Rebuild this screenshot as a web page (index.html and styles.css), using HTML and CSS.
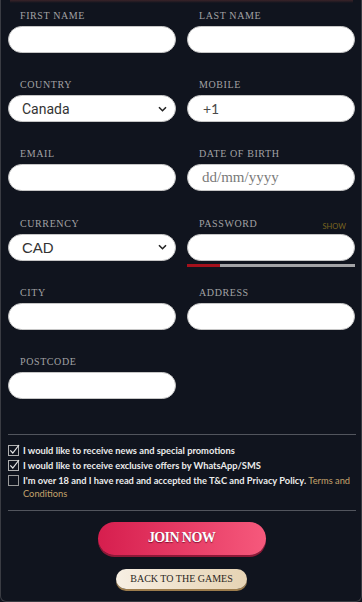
FILE: index.html
```html
<!DOCTYPE html>
<html lang="en">
<head>
<meta charset="utf-8">
<title>Register</title>
<link rel="stylesheet" href="styles.css">
</head>
<body>
<div class="panel">
  <div class="glow"></div>
  <form class="grid">
    <div class="field">
      <label class="lbl">FIRST NAME</label>
      <input class="inp" type="text">
    </div>
    <div class="field">
      <label class="lbl">LAST NAME</label>
      <input class="inp" type="text">
    </div>
    <div class="field">
      <label class="lbl">COUNTRY</label>
      <div class="inp select"><span class="val-roboto">Canada</span>
        <svg class="chev" width="9" height="6" viewBox="0 0 9 6"><path d="M1 1.2 L4.5 4.7 L8 1.2" fill="none" stroke="#222" stroke-width="1.6"/></svg>
      </div>
    </div>
    <div class="field">
      <label class="lbl">MOBILE</label>
      <input class="inp mobile" type="text" value="+1">
    </div>
    <div class="field">
      <label class="lbl">EMAIL</label>
      <input class="inp" type="text">
    </div>
    <div class="field">
      <label class="lbl">DATE OF BIRTH</label>
      <input class="inp date" type="text" placeholder="dd/mm/yyyy">
    </div>
    <div class="field">
      <label class="lbl">CURRENCY</label>
      <div class="inp select"><span class="val-arial">CAD</span>
        <svg class="chev" width="9" height="6" viewBox="0 0 9 6"><path d="M1 1.2 L4.5 4.7 L8 1.2" fill="none" stroke="#222" stroke-width="1.6"/></svg>
      </div>
    </div>
    <div class="field">
      <div class="lbl-row"><label class="lbl">PASSWORD</label><span class="show">SHOW</span></div>
      <input class="inp" type="password">
      <div class="meter"><span class="meter-fill" style="width:33px"></span></div>
    </div>
    <div class="field">
      <label class="lbl">CITY</label>
      <input class="inp" type="text">
    </div>
    <div class="field">
      <label class="lbl">ADDRESS</label>
      <input class="inp" type="text">
    </div>
    <div class="field">
      <label class="lbl">POSTCODE</label>
      <input class="inp" type="text">
    </div>
  </form>

  <div class="sep sep-top"></div>

  <ul class="checks">
    <li class="check">
      <svg class="box" width="13" height="12" viewBox="0 0 13 12"><rect x="0.5" y="1.5" width="10" height="10" fill="none" stroke="#b0b0b0"/><path d="M2.3 6.3 L4.8 9 L11 1" fill="none" stroke="#e6e6e6" stroke-width="1.2"/></svg>
      <div class="ctext">I would like to receive news and special promotions</div>
    </li>
    <li class="check">
      <svg class="box" width="13" height="12" viewBox="0 0 13 12"><rect x="0.5" y="1.5" width="10" height="10" fill="none" stroke="#b0b0b0"/><path d="M2.3 6.3 L4.8 9 L11 1" fill="none" stroke="#e6e6e6" stroke-width="1.2"/></svg>
      <div class="ctext">I would like to receive exclusive offers by WhatsApp/SMS</div>
    </li>
    <li class="check">
      <svg class="box" width="13" height="12" viewBox="0 0 13 12"><rect x="0.5" y="1.5" width="10" height="10" fill="none" stroke="#9a9a9a"/></svg>
      <div class="ctext-col">
        <div class="ctext nowrap">I'm over 18 and I have read and accepted the T&amp;C and Privacy Policy. <a class="terms">Terms and</a></div>
        <div class="ctext"><a class="terms">Conditions</a></div>
      </div>
    </li>
  </ul>

  <div class="sep sep-bottom"></div>

  <div class="actions">
    <button class="join" type="button">JOIN NOW</button>
    <button class="back" type="button">BACK TO THE GAMES</button>
  </div>
</div>
</body>
</html>
```

FILE: styles.css
```css
* { box-sizing: border-box; }

html, body {
  margin: 0;
  padding: 0;
  background: #10141e;
}

.panel {
  width: 362px;
  height: 602px;
  background: #10141e;
  border: 1px solid #3a3c43;
  border-top: 0;
  border-radius: 0 0 6px 6px;
  padding: 0 6px 0 7px;
  display: flex;
  flex-direction: column;
}

.glow {
  height: 3px;
  margin: 0 2px;
  background: linear-gradient(to bottom, #3a2328, rgba(58, 35, 40, 0));
}

.grid {
  margin: 7px 0 0;
  display: grid;
  grid-template-columns: 168px 168px;
  column-gap: 11px;
  row-gap: 26.2px;
}

.field {
  display: flex;
  flex-direction: column;
  height: 43px;
}

.lbl {
  display: block;
  font-family: "Liberation Serif", serif;
  font-size: 10px;
  line-height: 12px;
  letter-spacing: 0.6px;
  color: #a2a2a4;
  padding-left: 12px;
  margin-bottom: 4px;
}

.lbl-row {
  display: flex;
  justify-content: space-between;
  align-items: flex-end;
  height: 12px;
  margin-bottom: 4px;
  padding-right: 9px;
}

.lbl-row .lbl { margin-bottom: 0; }

.show {
  font-family: Lato, sans-serif;
  font-size: 7.5px;
  line-height: 10px;
  color: #7a6420;
  margin-bottom: -2px;
}

.inp {
  display: block;
  width: 168px;
  height: 28px;
  margin: 0;
  border: 1px solid #c6c6c6;
  border-radius: 14px;
  background: #fff;
  padding: 0 13px;
  outline: none;
  font-family: Lato, sans-serif;
  font-size: 14px;
  color: #555;
}

.mobile {
  padding-left: 15px;
  color: #4a4a4a;
}

.date {
  padding-left: 14px;
  font-family: "Liberation Serif", serif;
  font-size: 15px;
}

.date::placeholder {
  color: #7a7a7a;
  opacity: 1;
}

.select {
  display: flex;
  align-items: center;
  justify-content: space-between;
  padding: 0 8px 0 13px;
}

.val-roboto {
  font-family: Roboto, sans-serif;
  font-size: 14px;
  color: #333;
}

.val-arial {
  font-family: "Liberation Sans", sans-serif;
  font-size: 15px;
  color: #333;
}

.chev { display: block; }

.meter {
  height: 3px;
  margin-top: 3px;
  margin-bottom: -6px;
  background: #a3a3a6;
  display: flex;
}

.meter-fill {
  display: block;
  height: 3px;
  background: #a5111c;
}

.sep {
  height: 1px;
  background: #52555d;
  width: 348px;
}

.sep-top { margin-top: 35px; }

.checks {
  list-style: none;
  margin: 9px 0 0;
  padding: 0;
  display: flex;
  flex-direction: column;
  gap: 2px;
}

.check {
  display: flex;
  align-items: flex-start;
  gap: 2px;
}

.box {
  display: block;
  flex: none;
}

.ctext-col {
  display: flex;
  flex-direction: column;
}

.ctext {
  font-family: Lato, sans-serif;
  font-weight: 700;
  font-size: 9.3px;
  line-height: 13px;
  color: #ececec;
}

.nowrap { white-space: nowrap; }

.terms {
  color: #c4a36c;
  font-weight: 400;
}

.sep-bottom { margin-top: 10px; }

.actions {
  display: flex;
  flex-direction: column;
  align-items: center;
}

.join {
  margin-top: 11px;
  width: 168px;
  height: 33px;
  border: 0;
  border-radius: 17px;
  background: linear-gradient(to right, #d61e4e, #f6597c);
  box-shadow: 0 2px 0 #8e1837;
  font-family: "Liberation Serif", serif;
  font-weight: 700;
  font-size: 14px;
  letter-spacing: -0.6px;
  color: #fff;
  text-shadow: 0 1px 1px rgba(90, 0, 30, 0.7);
  padding: 0;
}

.back {
  margin-top: 14px;
  width: 131px;
  height: 20px;
  border: 0;
  border-radius: 10px;
  background: linear-gradient(to right, #f7efe3, #e6d3b3);
  box-shadow: 0 2px 0 #9c7c4c;
  font-family: "Liberation Serif", serif;
  font-size: 10px;
  color: #2a2622;
  padding: 0;
}
```
